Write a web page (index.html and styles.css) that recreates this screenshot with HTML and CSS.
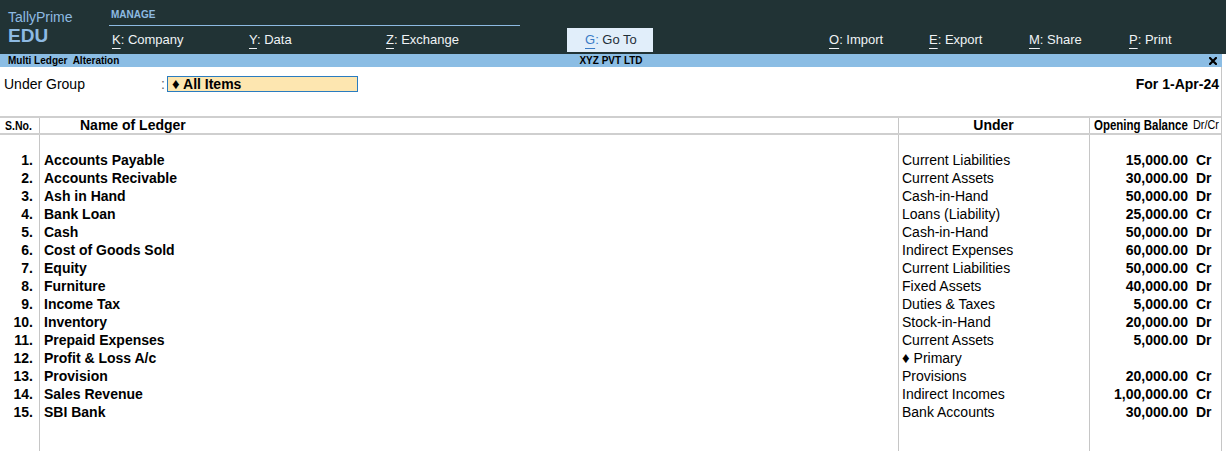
FILE: index.html
```html
<!DOCTYPE html>
<html lang="en">
<head>
<meta charset="utf-8">
<title>Multi Ledger Alteration</title>
<link rel="stylesheet" href="styles.css">
</head>
<body>
<div class="app">
  <header class="topbar">
    <div class="brand">
      <div class="brand-name">TallyPrime</div>
      <div class="brand-edition">EDU</div>
    </div>
    <nav class="menu">
      <div class="menu-group">MANAGE</div>
      <ul class="menu-items">
        <li class="menu-item mi-company"><span class="key">K</span>: Company</li>
        <li class="menu-item mi-data"><span class="key">Y</span>: Data</li>
        <li class="menu-item mi-exchange"><span class="key">Z</span>: Exchange</li>
        <li class="menu-item mi-goto"><span class="key-blue"><span class="key">G</span>:</span> Go To</li>
        <li class="menu-item mi-import"><span class="key">O</span>: Import</li>
        <li class="menu-item mi-export"><span class="key">E</span>: Export</li>
        <li class="menu-item mi-share"><span class="key">M</span>: Share</li>
        <li class="menu-item mi-print"><span class="key">P</span>: Print</li>
      </ul>
    </nav>
  </header>

  <main class="window">
    <div class="titlebar">
      <div class="title-left">Multi Ledger  Alteration</div>
      <div class="title-center">XYZ PVT LTD</div>
      <div class="title-right">
        <svg class="close" viewBox="0 0 8 8" width="8" height="8" aria-hidden="true">
          <path d="M1 1 L7 7 M7 1 L1 7" stroke="#000" stroke-width="2.2" stroke-linecap="square" fill="none"/>
        </svg>
      </div>
    </div>

    <div class="content">
      <div class="filter">
        <span class="filter-label">Under Group</span>
        <span class="filter-colon">:</span>
        <span class="filter-field"><span class="diamond">♦</span> All Items</span>
        <span class="filter-date">For 1-Apr-24</span>
      </div>

      <div class="ledger">
        <div class="ledger-head">
          <div class="h-sno"><span class="narrow">S.No.</span></div>
          <div class="h-name">Name of Ledger</div>
          <div class="h-under">Under</div>
          <div class="h-bal">
            <span class="h-bal-label"><span class="narrow">Opening Balance</span></span>
            <span class="h-drcr"><span class="narrow">Dr/Cr</span></span>
          </div>
        </div>

        <div class="ledger-body">
          <div class="row"><div class="c-sno">1.</div><div class="c-name">Accounts Payable</div><div class="c-under">Current Liabilities</div><div class="c-bal"><span class="amt">15,000.00</span><span class="drcr">Cr</span></div></div>
          <div class="row"><div class="c-sno">2.</div><div class="c-name">Accounts Recivable</div><div class="c-under">Current Assets</div><div class="c-bal"><span class="amt">30,000.00</span><span class="drcr">Dr</span></div></div>
          <div class="row"><div class="c-sno">3.</div><div class="c-name">Ash in Hand</div><div class="c-under">Cash-in-Hand</div><div class="c-bal"><span class="amt">50,000.00</span><span class="drcr">Dr</span></div></div>
          <div class="row"><div class="c-sno">4.</div><div class="c-name">Bank Loan</div><div class="c-under">Loans (Liability)</div><div class="c-bal"><span class="amt">25,000.00</span><span class="drcr">Cr</span></div></div>
          <div class="row"><div class="c-sno">5.</div><div class="c-name">Cash</div><div class="c-under">Cash-in-Hand</div><div class="c-bal"><span class="amt">50,000.00</span><span class="drcr">Dr</span></div></div>
          <div class="row"><div class="c-sno">6.</div><div class="c-name">Cost of Goods Sold</div><div class="c-under">Indirect Expenses</div><div class="c-bal"><span class="amt">60,000.00</span><span class="drcr">Dr</span></div></div>
          <div class="row"><div class="c-sno">7.</div><div class="c-name">Equity</div><div class="c-under">Current Liabilities</div><div class="c-bal"><span class="amt">50,000.00</span><span class="drcr">Cr</span></div></div>
          <div class="row"><div class="c-sno">8.</div><div class="c-name">Furniture</div><div class="c-under">Fixed Assets</div><div class="c-bal"><span class="amt">40,000.00</span><span class="drcr">Dr</span></div></div>
          <div class="row"><div class="c-sno">9.</div><div class="c-name">Income Tax</div><div class="c-under">Duties &amp; Taxes</div><div class="c-bal"><span class="amt">5,000.00</span><span class="drcr">Cr</span></div></div>
          <div class="row"><div class="c-sno">10.</div><div class="c-name">Inventory</div><div class="c-under">Stock-in-Hand</div><div class="c-bal"><span class="amt">20,000.00</span><span class="drcr">Dr</span></div></div>
          <div class="row"><div class="c-sno">11.</div><div class="c-name">Prepaid Expenses</div><div class="c-under">Current Assets</div><div class="c-bal"><span class="amt">5,000.00</span><span class="drcr">Dr</span></div></div>
          <div class="row"><div class="c-sno">12.</div><div class="c-name">Profit &amp; Loss A/c</div><div class="c-under"><span class="diamond">♦</span> Primary</div><div class="c-bal"><span class="amt"></span><span class="drcr"></span></div></div>
          <div class="row"><div class="c-sno">13.</div><div class="c-name">Provision</div><div class="c-under">Provisions</div><div class="c-bal"><span class="amt">20,000.00</span><span class="drcr">Cr</span></div></div>
          <div class="row"><div class="c-sno">14.</div><div class="c-name">Sales Revenue</div><div class="c-under">Indirect Incomes</div><div class="c-bal"><span class="amt">1,00,000.00</span><span class="drcr">Cr</span></div></div>
          <div class="row"><div class="c-sno">15.</div><div class="c-name">SBI Bank</div><div class="c-under">Bank Accounts</div><div class="c-bal"><span class="amt">30,000.00</span><span class="drcr">Dr</span></div></div>
        </div>
      </div>
    </div>
  </main>
</div>
</body>
</html>
```
FILE: styles.css
```css
* { box-sizing: border-box; }

html, body { margin: 0; padding: 0; }

body {
  width: 1226px;
  height: 451px;
  overflow: hidden;
  background: #ffffff;
  color: #000000;
  font-family: "Liberation Sans", Arial, sans-serif;
}

.app {
  display: flex;
  flex-direction: column;
  height: 451px;
}

/* ---------- top bar ---------- */
.topbar {
  flex: none;
  height: 54px;
  background: #213335;
  display: flex;
}

.brand {
  width: 109px;
  padding-left: 8px;
  color: #8dbae2;
}

.brand-name {
  font-size: 14px;
  line-height: 16px;
  padding-top: 9px;
}

.brand-edition {
  font-size: 19px;
  font-weight: bold;
  line-height: 20px;
  margin-top: 1px;
}

.menu {
  flex: 1;
  display: flex;
  flex-direction: column;
}

.menu-group {
  width: 411px;
  padding: 9px 0 4px 2px;
  font-size: 10px;
  font-weight: bold;
  line-height: 12px;
  color: #8dbae2;
  border-bottom: 1px solid #8dbae2;
}

.menu-items {
  list-style: none;
  margin: 2px 0 0;
  padding: 0 0 0 3px;
  display: flex;
  height: 24px;
}

.menu-item {
  font-size: 13px;
  line-height: 24px;
  color: #f0f3f5;
  white-space: nowrap;
}

.key {
  text-decoration: underline;
  text-decoration-thickness: 1px;
  text-underline-offset: 4px;
}

.mi-company { width: 137px; }
.mi-data { width: 137px; }
.mi-exchange { width: 181px; }

.mi-goto {
  width: 86px;
  padding-left: 18px;
  margin-right: 176px;
  background: #e1eefa;
  color: #1f2f38;
}

.key-blue { color: #3a7bc6; }

.mi-import, .mi-export, .mi-share { width: 100px; }

/* ---------- window ---------- */
.window {
  flex: 1;
  width: 1222px;
  display: flex;
  flex-direction: column;
  min-height: 0;
}

.titlebar {
  flex: none;
  height: 13px;
  background: #8bbde4;
  display: grid;
  grid-template-columns: 1fr auto 1fr;
  align-items: center;
  font-size: 10px;
  font-weight: bold;
  line-height: 13px;
}

.title-left {
  padding-left: 8px;
  white-space: pre;
}

.title-right {
  display: flex;
  justify-content: flex-end;
  padding-right: 5px;
}

.close { display: block; }

.content {
  flex: 1;
  display: flex;
  flex-direction: column;
  border-right: 1px solid #c6c6c6;
  min-height: 0;
}

/* ---------- filter row ---------- */
.filter {
  flex: none;
  display: flex;
  align-items: flex-start;
  height: 16px;
  margin-top: 9px;
  padding: 0 2px 0 4px;
  font-size: 14px;
}

.filter-label {
  width: 157px;
  line-height: 16px;
}

.filter-colon {
  width: 6px;
  line-height: 16px;
  color: #5a6470;
}

.filter-field {
  width: 191px;
  height: 16px;
  line-height: 14px;
  padding-left: 4px;
  border: 1px solid #2a7cc0;
  background: #fde6b0;
  font-weight: bold;
}

.filter-date {
  margin-left: auto;
  line-height: 16px;
  font-weight: bold;
}

/* ---------- ledger table ---------- */
.ledger {
  flex: 1;
  margin-top: 24px;
  background:
    linear-gradient(#c6c6c6, #c6c6c6) 39px 0 / 1px 100% no-repeat,
    linear-gradient(#c6c6c6, #c6c6c6) 898px 0 / 1px 100% no-repeat,
    linear-gradient(#c6c6c6, #c6c6c6) 1089px 0 / 1px 100% no-repeat;
}

.ledger-head,
.row {
  display: grid;
  grid-template-columns: 39px 859px 191px 1fr;
}

.ledger-head {
  height: 19px;
  border-top: 2px solid #cfcfcf;
  border-bottom: 2px solid #cfcfcf;
  font-size: 14px;
  font-weight: bold;
  line-height: 15px;
  white-space: nowrap;
}

.narrow {
  display: inline-block;
  transform-origin: left center;
}

.h-sno {
  padding-left: 5px;
  font-size: 13px;
}
.h-sno .narrow { transform: scaleX(0.81); }

.h-name { padding-left: 41px; }

.h-under { text-align: center; }

.h-bal {
  display: flex;
  padding: 0 2px 0 5px;
}

.h-bal-label { width: 94px; }
.h-bal-label .narrow { transform: scaleX(0.82); }

.h-drcr {
  width: 26px;
  margin-left: auto;
  font-size: 12px;
  font-weight: normal;
}
.h-drcr .narrow { transform: scaleX(0.9); }

.ledger-body { padding-top: 16px; }

.row {
  height: 18px;
  font-size: 14px;
  line-height: 18px;
  white-space: nowrap;
}

.c-sno {
  text-align: right;
  padding-right: 6px;
  font-weight: bold;
}

.c-name {
  padding-left: 5px;
  font-weight: bold;
}

.c-under { padding-left: 4px; }

.c-bal {
  display: flex;
  font-weight: bold;
}

.amt {
  flex: 1;
  text-align: right;
}

.drcr {
  width: 33px;
  padding-left: 8px;
}

.diamond { font-size: 15px; }
```
